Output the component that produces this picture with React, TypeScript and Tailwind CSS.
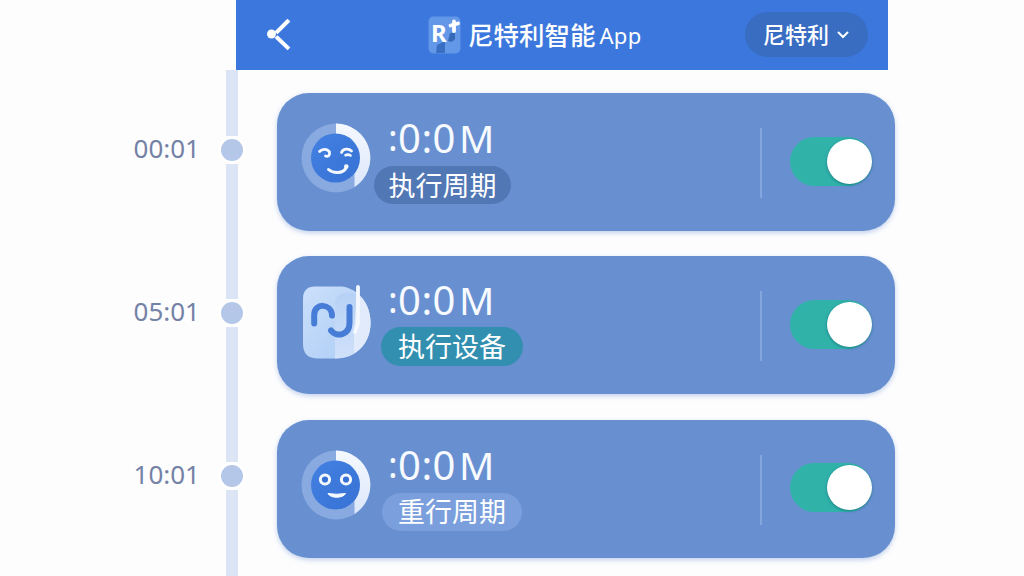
import React, { useState } from "react";

type IconKind = "wink" | "device" | "smile";

interface ScheduleItem {
  id: number;
  time: string;
  label: string;
  icon: IconKind;
  clockClass: string;
  tagClass: string;
}

const items: ScheduleItem[] = [
  {
    id: 1,
    time: "00:01",
    label: "执行周期",
    icon: "wink",
    clockClass: "mt-[25px]",
    tagClass: "mt-2 h-[38px] w-[137px] bg-[#5277b5]",
  },
  {
    id: 2,
    time: "05:01",
    label: "执行设备",
    icon: "device",
    clockClass: "mt-6",
    tagClass: "mt-[7px] ml-[7px] h-[39px] w-[142px] bg-[#328fb0]",
  },
  {
    id: 3,
    time: "10:01",
    label: "重行周期",
    icon: "smile",
    clockClass: "mt-[25px]",
    tagClass: "mt-2 ml-2 h-[38px] w-[140px] bg-[#7a9fdc]",
  },
];

const Ring = () => (
  <>
    <circle cx="35" cy="35" r="34.5" fill="#88aae0" />
    <path d="M35 .5A34.5 34.5 0 0 1 53.5 64V35H35Z" fill="url(#ringLight)" />
    <circle cx="34.5" cy="35" r="24.5" fill="url(#faceBlue)" />
  </>
);

const Defs = () => (
  <defs>
    <linearGradient id="ringLight" x1="0" y1="0" x2="0" y2="1">
      <stop offset="0" stopColor="#f5f9ff" />
      <stop offset="1" stopColor="#dce7fa" />
    </linearGradient>
    <linearGradient id="faceBlue" x1="0" y1="0" x2="1" y2="1">
      <stop offset="0" stopColor="#4381e2" />
      <stop offset="1" stopColor="#3771d4" />
    </linearGradient>
    <linearGradient id="panelLeft" x1="0" y1="0" x2="1" y2="1">
      <stop offset="0" stopColor="#cbe0fb" />
      <stop offset="1" stopColor="#abcbf5" />
    </linearGradient>
    <linearGradient id="panelRight" x1="0" y1="0" x2="0" y2="1">
      <stop offset="0" stopColor="#b6d1f6" />
      <stop offset="1" stopColor="#d0e1f9" />
    </linearGradient>
  </defs>
);

const CardIcon = ({ kind }: { kind: IconKind }) => {
  if (kind === "wink") {
    return (
      <svg width="70" height="70" viewBox="0 0 70 70" className="mt-[30px]">
        <Defs />
        <Ring />
        <g fill="none" stroke="#f5f9ff" strokeWidth="2.8" strokeLinecap="round">
          <path d="M18.5 28.5C21 25.5 26.5 25.5 28.5 29C29 32.5 27 34 24.5 33" />
          <path d="M40.5 29.5C42 25.5 47.5 25 50.5 28" />
          <path d="M44.5 32.2C46 31.5 48 31.5 49.5 32.5" strokeWidth="2.6" />
          <path d="M27.5 46.5C32 50.5 42 51 45 45" strokeWidth="3" />
        </g>
        <circle cx="45.3" cy="43.5" r="2.3" fill="#f5f9ff" />
      </svg>
    );
  }

  if (kind === "smile") {
    return (
      <svg width="70" height="70" viewBox="0 0 70 70" className="mt-[30px]">
        <Ring />
        <g fill="#3771d4" stroke="#f5f9ff" strokeWidth="3">
          <circle cx="24" cy="29.5" r="4.6" />
          <circle cx="45" cy="29.5" r="4.6" />
        </g>
        <path
          d="M27 43.5Q35.5 45 44.5 43.5C43 48 29.5 49 27 43.5Z"
          fill="#f5f9ff"
          stroke="#f5f9ff"
          strokeLinejoin="round"
        />
      </svg>
    );
  }

  return (
    <svg width="70" height="74" viewBox="0 0 70 74" className="mt-[29px]">
      <path
        d="M14 1.5H41C58 4 69.5 19 69.5 38C69.5 59 54 73.5 36 73.5H17Q2 73.5 2 59V14Q2 1.5 14 1.5Z"
        fill="url(#panelLeft)"
      />
      <path
        d="M34 15Q37 8 45 8H52C63 13 69.5 25 69.5 38C69.5 59 54 73.5 34 73.5Z"
        fill="url(#panelRight)"
      />
      <path d="M56 8.5C65 15 69.5 26 69.5 38C69.5 52 63 62 53 68.5V46Z" fill="#e1ebfb" />
      <path d="M57 2V38L54 47" fill="none" stroke="#f5f8fd" strokeWidth="3.8" strokeLinecap="round" />
      <g fill="none" stroke="#477dd6" strokeWidth="6" strokeLinecap="round" strokeLinejoin="round">
        <path d="M13.2 38.5V30C13.2 17.5 30.5 18 31 30.5" />
        <path d="M30 45.5C35 52.5 48.5 50.5 48.5 38V22" />
      </g>
    </svg>
  );
};

const Toggle = () => {
  const [on, setOn] = useState(true);

  return (
    <button
      type="button"
      role="switch"
      aria-checked={on}
      onClick={() => setOn(!on)}
      className={`flex h-[49px] w-[82px] items-center rounded-full ${
        on ? "justify-end bg-[#30b2a9]" : "justify-start bg-slate-400"
      }`}
    >
      <span className="size-[45px] rounded-full bg-white shadow-[0_1px_3px_rgba(10,95,110,0.65)]" />
    </button>
  );
};

const Logo = () => (
  <svg width="33" height="38" viewBox="0 0 33 38">
    <rect x=".5" y=".5" width="32" height="37" rx="5" fill="#6397e8" />
    <path d="M9 29L17 25V37H8Z" fill="#396fc3" />
    <path d="M22 17H27V23Q25 27 20 25Z" fill="#3769b9" />
    <text x="3" y="26" fontSize="24" fontWeight="700" fill="#fff" fontFamily="Noto Sans, sans-serif">
      R
    </text>
    <path d="M26 5.5V15M22.5 9.5L30 7.5" stroke="#fff" strokeWidth="3.8" strokeLinecap="round" />
  </svg>
);

const Header = () => (
  <header className="ml-[236px] flex h-[70px] w-[652px] shrink-0 items-center bg-[#3b77dc] text-white">
    <button type="button" aria-label="返回" className="ml-[29px]">
      <svg width="28" height="36" viewBox="0 0 28 36" fill="none">
        <path d="M12.5 14.5L22.500 4.500M12.5 21L22.5 30.5" stroke="#fff" strokeWidth="4" strokeLinecap="square" />
        <circle cx="6.5" cy="17" r="4.5" fill="#fff" />
      </svg>
    </button>
    <div className="ml-[135px] flex items-center">
      <Logo />
      <h1 className="ml-[7px] flex items-baseline whitespace-nowrap">
        <span className="text-[25.5px] leading-9 font-medium">尼特利智能</span>
        <span className="mb-px ml-1 self-end text-[22px] leading-9 tracking-[0.3px]">App</span>
      </h1>
    </div>
    <button
      type="button"
      className="mr-5 mb-px ml-auto flex h-[45px] w-[123px] items-center rounded-full bg-[#386dc2] pl-[18px]"
    >
      <span className="text-[22px] font-medium">尼特利</span>
      <svg width="12" height="8" viewBox="0 0 12 8" fill="none" className="ml-2">
        <path d="M1.5 1.5L6 6L10.5 1.5" stroke="#fff" strokeWidth="2" strokeLinecap="round" />
      </svg>
    </button>
  </header>
);

const ScheduleRow = ({ item }: { item: ScheduleItem }) => (
  <div className="flex h-[163.3px] shrink-0">
    <time className="mt-[59.6px] w-[200px] text-right text-[26px] leading-9 text-[#7482a6]">
      {item.time}
    </time>

    <div className="ml-[18px] flex w-7 flex-col items-center">
      <div className="h-[65.6px] w-3 shrink-0 bg-[#dce5f5]" />
      <div className="size-7 shrink-0 rounded-full border-3 border-white bg-[#b4c7e8]" />
      <div className="w-3 flex-1 bg-[#dce5f5]" />
    </div>

    <div className="mt-[23px] ml-[31px] flex h-[138px] w-[618px] rounded-[32px] bg-[#6890d1] pr-[23px] pl-6 shadow-[0_2px_5px_rgba(104,144,209,0.4)]">
      <CardIcon kind={item.icon} />
      <div className="ml-[3px]">
        <div
          className={`ml-[14px] flex h-10 items-center text-[40px] leading-10 tracking-[0.5px] text-[#f7faff] ${item.clockClass}`}
        >
          <span className="w-[10px] text-[36px]">:</span>
          <span>0:0</span>
          <span className="ml-[3px] text-[39px]">M</span>
        </div>
        <div
          className={`flex items-center justify-center rounded-full pt-px text-[27px] leading-9 whitespace-nowrap text-white ${item.tagClass}`}
        >
          {item.label}
        </div>
      </div>
      <div className="ml-auto flex items-center pb-[2px]">
        <div className="mt-1 mr-7 h-[70px] w-0.5 bg-[#83a6de]" />
        <Toggle />
      </div>
    </div>
  </div>
);

const App: React.FC = () => {
  return (
    <div className="flex h-[576px] w-[1024px] flex-col overflow-hidden bg-[#fdfdfe] font-['Noto_Sans','Noto_Sans_CJK_SC',sans-serif]">
      <Header />
      <main className="flex flex-1 flex-col">
        {items.map((item) => (
          <ScheduleRow key={item.id} item={item} />
        ))}
        {/* Rail continues below the last visible row */}
        <div className="ml-[226px] h-6 w-3 shrink-0 bg-[#dce5f5]" />
      </main>
    </div>
  );
};

export default App;
